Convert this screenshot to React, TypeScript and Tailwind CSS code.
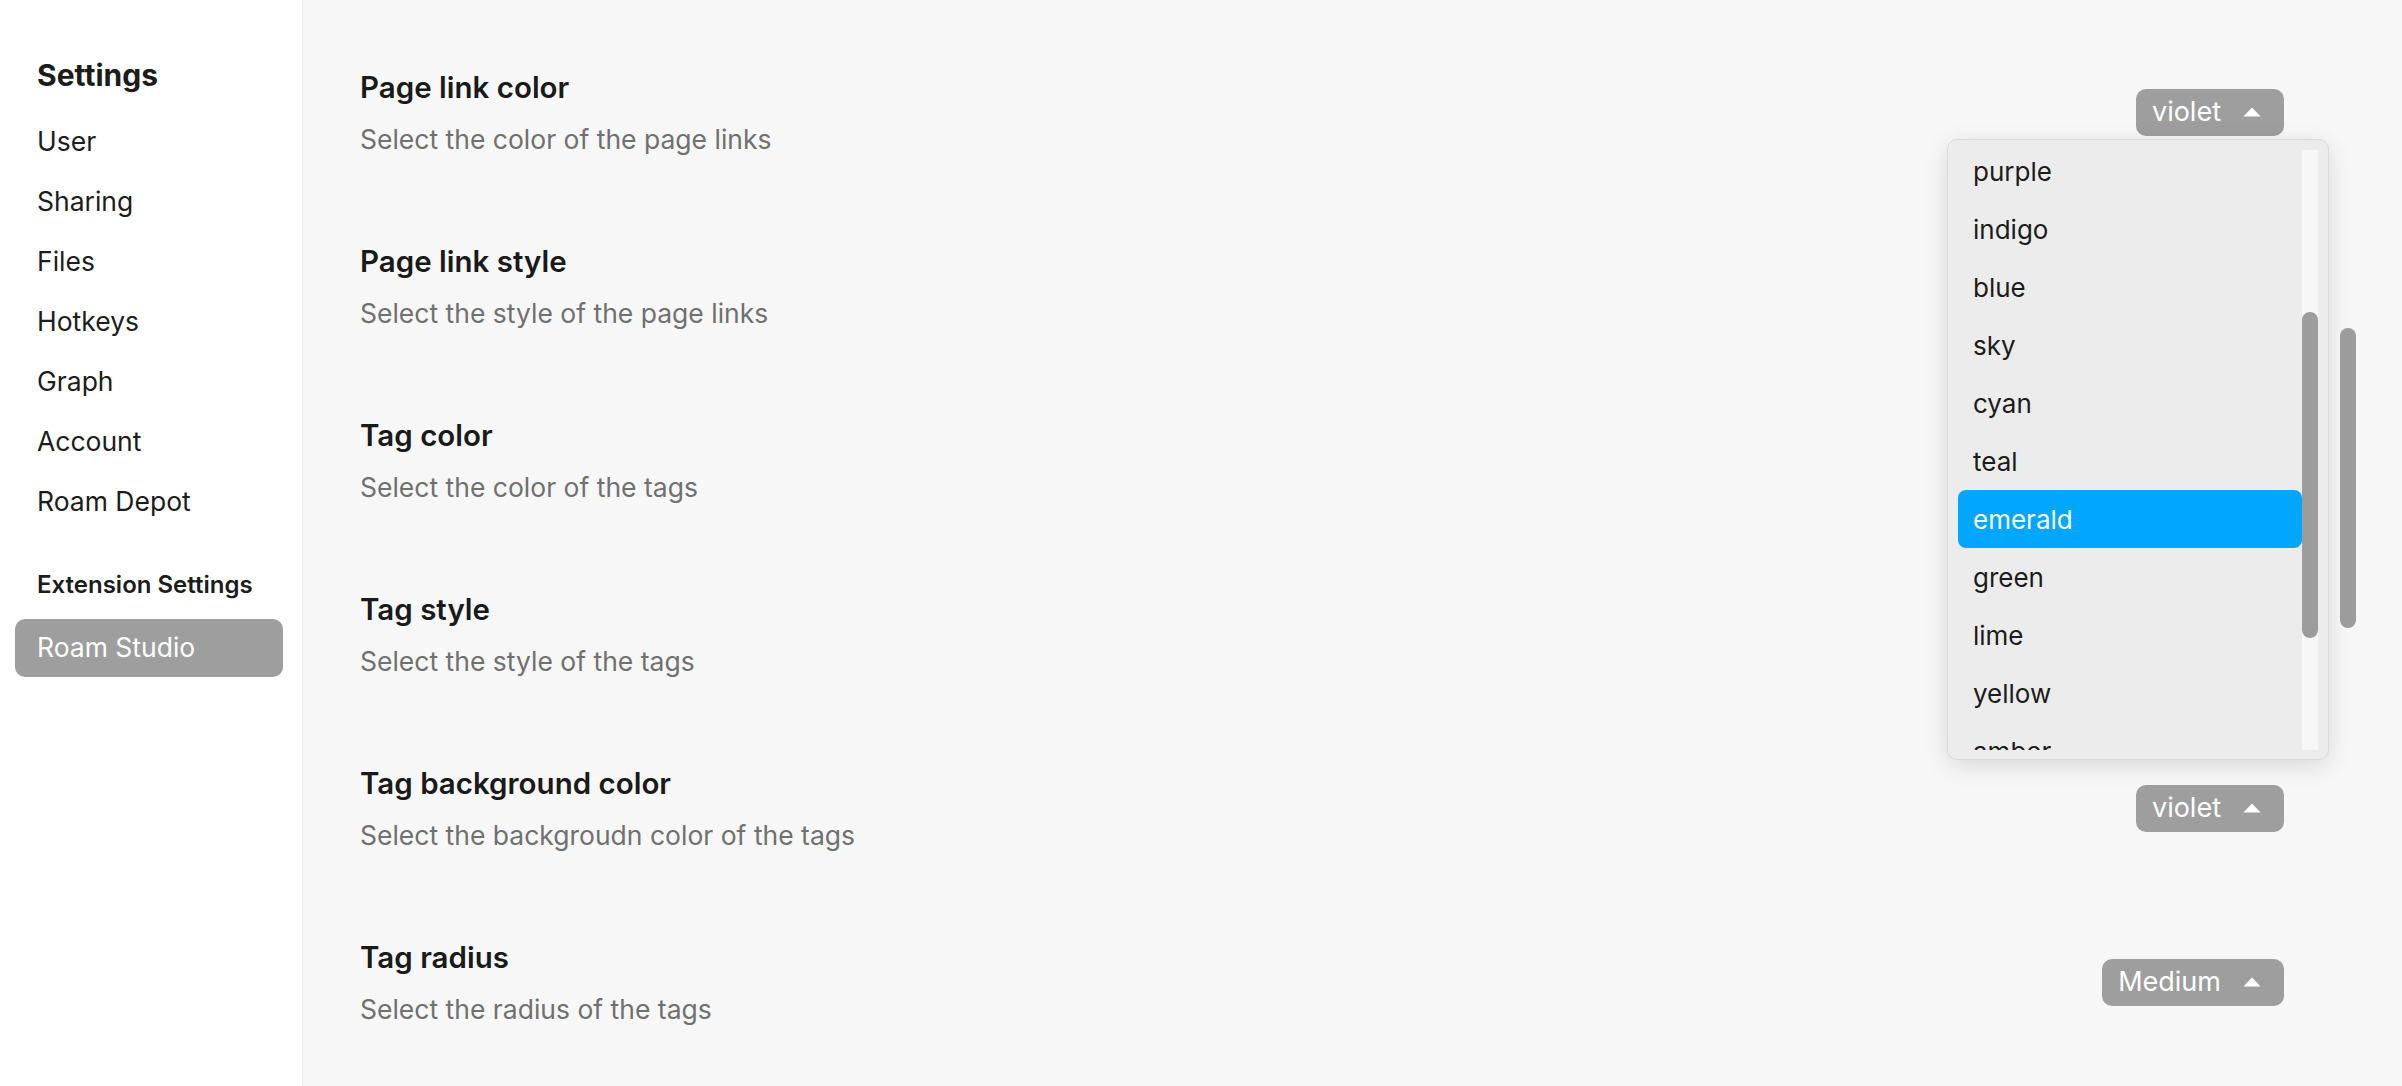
import React from "react";

const sections = [
  { title: "Page link color", desc: "Select the color of the page links", value: "violet" },
  { title: "Page link style", desc: "Select the style of the page links", value: null },
  { title: "Tag color", desc: "Select the color of the tags", value: null },
  { title: "Tag style", desc: "Select the style of the tags", value: null },
  { title: "Tag background color", desc: "Select the backgroudn color of the tags", value: "violet" },
  { title: "Tag radius", desc: "Select the radius of the tags", value: "Medium" },
];

const navItems = ["User", "Sharing", "Files", "Hotkeys", "Graph", "Account", "Roam Depot"];

const options = ["purple", "indigo", "blue", "sky", "cyan", "teal", "emerald", "green", "lime", "yellow", "amber"];

function Caret() {
  return (
    <svg width="18" height="10" viewBox="0 0 18 10" className="shrink-0">
      <path d="M9 0.5 L17.5 9.5 L0.5 9.5 Z" fill="#ffffff" />
    </svg>
  );
}

function SelectButton({ value }: { value: string }) {
  return (
    <div className="flex h-[47px] items-center gap-[22px] rounded-[10px] bg-[#9e9e9e] pl-[16px] pr-[23px] text-[27px] text-white">
      <span>{value}</span>
      <Caret />
    </div>
  );
}

export default function App() {
  return (
    <div
      className="relative flex h-[1086px] w-full overflow-hidden bg-[#f7f7f7] text-[#1c1c1c]"
      style={{ fontFamily: "Inter, 'Noto Sans', sans-serif" }}
    >
      {/* sidebar */}
      <aside className="flex w-[303px] shrink-0 flex-col border-r border-[#ececec] bg-white pl-[15px] pr-[19px] pt-[55px]">
        <div className="px-[22px] text-[30px] font-bold leading-[40px]">Settings</div>
        <div className="mt-[17px] flex flex-col">
          {navItems.map((item) => (
            <div key={item} className="flex h-[60px] items-center px-[22px] text-[26.5px]">
              {item}
            </div>
          ))}
        </div>
        <div className="mt-[33px] px-[22px] text-[24px] font-semibold leading-[40px]">Extension Settings</div>
        <div className="mt-[14px] flex h-[58px] items-center rounded-[10px] bg-[#9e9e9e] px-[22px] text-[26.5px] text-white">
          Roam Studio
        </div>
      </aside>

      {/* main */}
      <main className="flex flex-1 flex-col pl-[57px] pr-[118px] pt-[25px]">
        {sections.map((s) => (
          <div key={s.title} className="flex items-center justify-between py-[42px]">
            <div className="flex flex-col gap-[14px]">
              <div className="text-[29.5px] font-semibold leading-[40px] text-[#1a1a1a]">{s.title}</div>
              <div className="text-[26.5px] leading-[36px] text-[#707070]">{s.desc}</div>
            </div>
            {s.value && <SelectButton value={s.value} />}
          </div>
        ))}
      </main>

      {/* open dropdown */}
      <div className="absolute left-[1947px] top-[139px] flex h-[621px] w-[382px] rounded-[10px] border border-[#dadada] bg-[#ececec] py-[10px] pl-[10px] pr-[10px] shadow-[0_6px_24px_rgba(0,0,0,0.12)]">
        <div className="h-[600px] flex-1 overflow-hidden">
          <div className="-mt-[8px] flex flex-col">
            {options.map((o) => (
              <div
                key={o}
                className={
                  o === "emerald"
                    ? "flex h-[58px] shrink-0 items-center rounded-[8px] bg-[#00a6ff] px-[15px] text-[26px] text-white"
                    : "flex h-[58px] shrink-0 items-center px-[15px] text-[26px] text-[#1c1c1c]"
                }
              >
                {o}
              </div>
            ))}
          </div>
        </div>
        <div className="relative h-[600px] w-[16px] bg-[#f7f7f7]">
          <div className="absolute left-0 top-[162px] h-[326px] w-[16px] rounded-full bg-[#9c9c9c]" />
        </div>
      </div>

      {/* page scrollbar overlay */}
      <div className="absolute left-[2340px] top-[328px] h-[300px] w-[16px] rounded-full bg-[#9c9c9c]" />
    </div>
  );
}
